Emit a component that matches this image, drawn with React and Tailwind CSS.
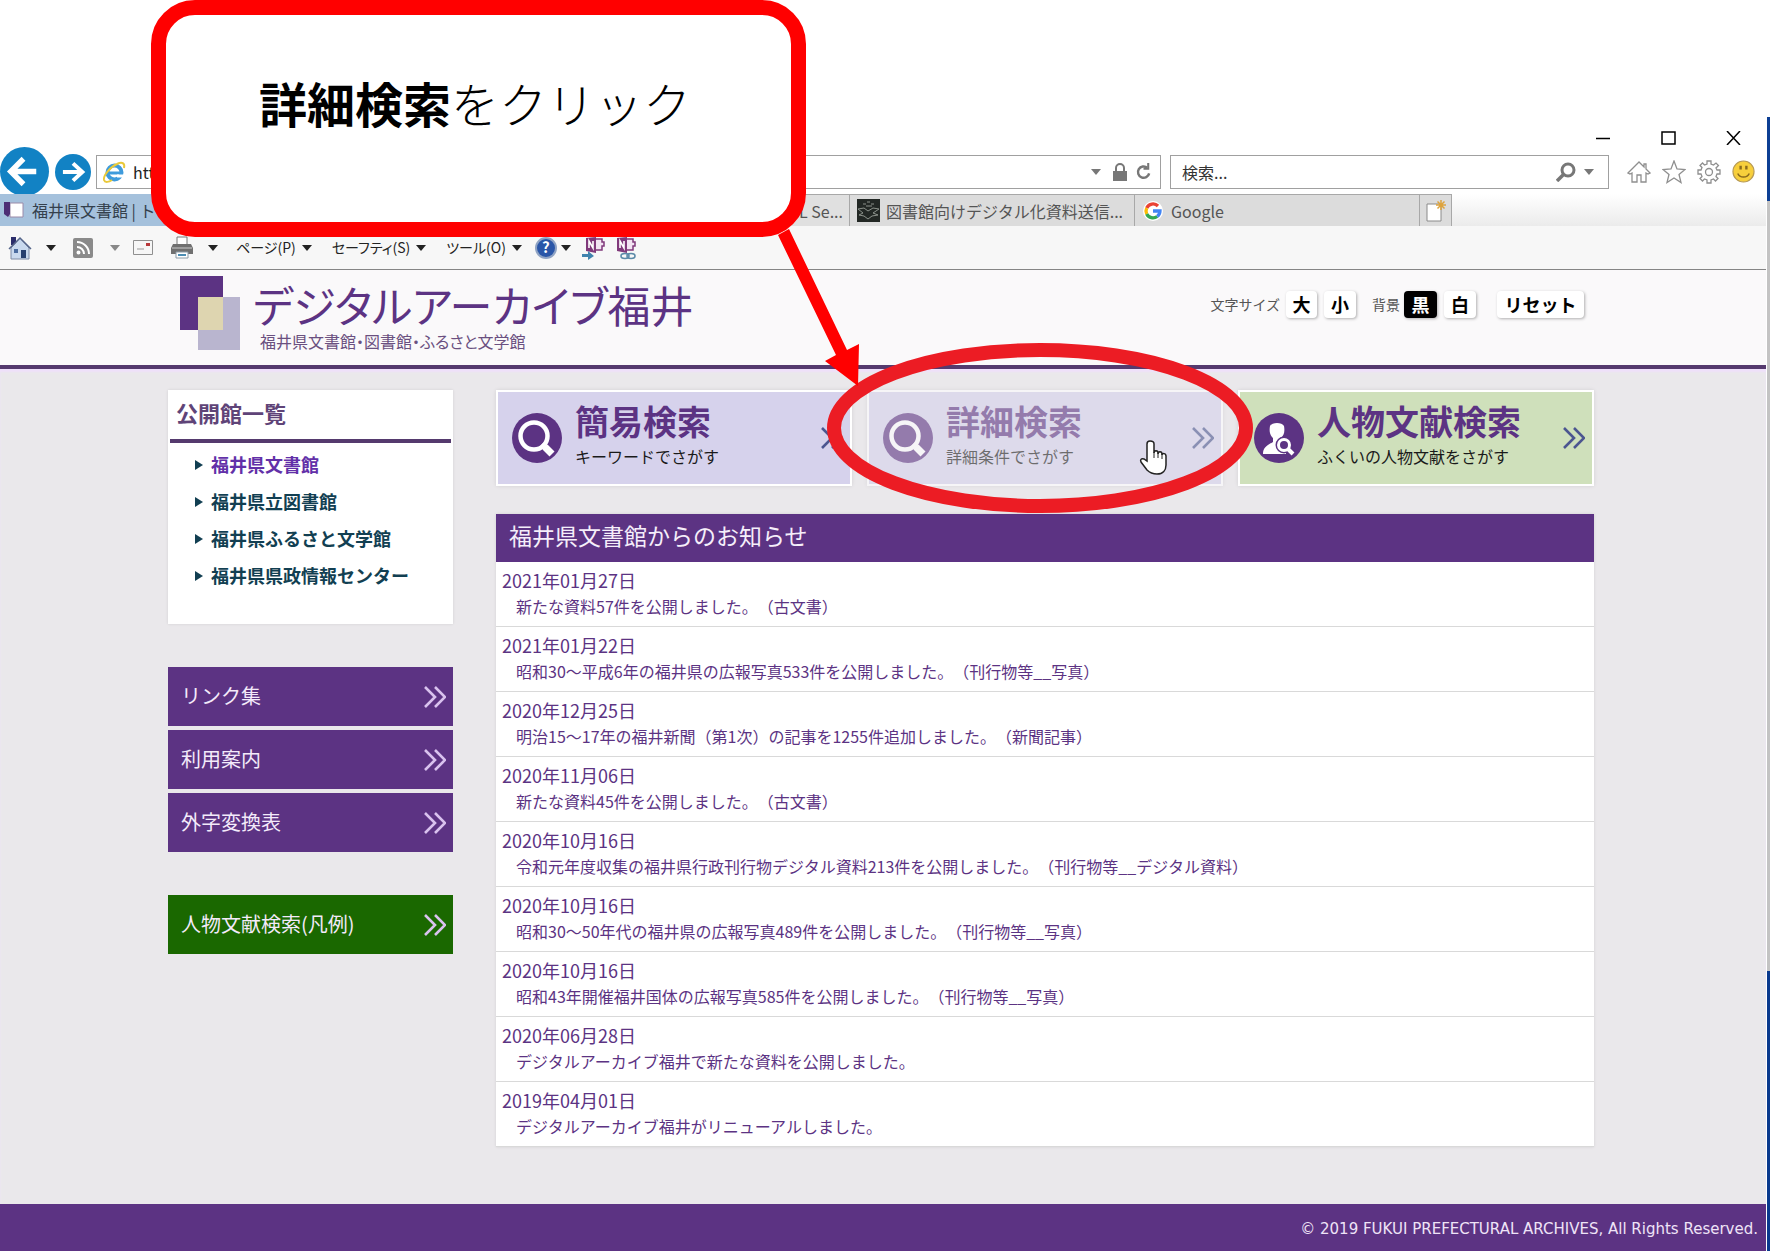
import React from "react";

const news = [
  {date: "2021年01月27日", text: "新たな資料57件を公開しました。（古文書）"},
  {date: "2021年01月22日", text: "昭和30～平成6年の福井県の広報写真533件を公開しました。（刊行物等__写真）"},
  {date: "2020年12月25日", text: "明治15～17年の福井新聞（第1次）の記事を1255件追加しました。（新聞記事）"},
  {date: "2020年11月06日", text: "新たな資料45件を公開しました。（古文書）"},
  {
    date: "2020年10月16日",
    text: "令和元年度収集の福井県行政刊行物デジタル資料213件を公開しました。（刊行物等__デジタル資料）",
  },
  {date: "2020年10月16日", text: "昭和30～50年代の福井県の広報写真489件を公開しました。（刊行物等__写真）"},
  {date: "2020年10月16日", text: "昭和43年開催福井国体の広報写真585件を公開しました。（刊行物等__写真）"},
  {date: "2020年06月28日", text: "デジタルアーカイブ福井で新たな資料を公開しました。"},
  {date: "2019年04月01日", text: "デジタルアーカイブ福井がリニューアルしました。"},
];

const places = ["福井県文書館", "福井県立図書館", "福井県ふるさと文学館", "福井県県政情報センター"];

const Caret = ({className = ""}) => (
  <svg viewBox="0 0 10 6" className={`w-[10px] h-[6px] shrink-0 ${className}`} fill="currentColor">
    <path d="M0 0h10L5 6z" />
  </svg>
);

const Chevrons = ({className = ""}) => (
  <svg
    viewBox="0 0 22 22"
    className={`size-[22px] shrink-0 ${className}`}
    fill="none"
    stroke="currentColor"
    strokeWidth="2.6"
  >
    <path d="M1 1l10 10L1 21M11 1l10 10-10 10" />
  </svg>
);

const RoundArrow = ({size, flip, label}) => (
  <button aria-label={label} className={`${size} shrink-0 rounded-full bg-[#1282c4] text-white`}>
    <svg
      viewBox="0 0 50 50"
      className="size-full"
      fill="none"
      stroke="currentColor"
      strokeWidth="5.5"
    >
      {flip ? <path d="M11 25h25M25 13l13 12-13 12" /> : <path d="M37 25H12M24 12L11 25l13 13" />}
    </svg>
  </button>
);

const IeIcon = () => (
  <svg viewBox="0 0 24 24" className="size-[24px] shrink-0" fill="none">
    <circle cx="12.500" cy="12.500" r="7" stroke="#3f9bdc" strokeWidth="4" />
    <path d="M7 13h14" stroke="#3f9bdc" strokeWidth="3" />
    <path d="M15 16h8" stroke="#fff" strokeWidth="3" />
    <path
      d="M22 8c1-4-1-7-7-4C8 7 1 16 2 20c1 3 5 2 8 0"
      stroke="#e9c93a"
      strokeWidth="2"
    />
  </svg>
);

const TitleBar = () => (
  <div className="flex h-[14px] justify-end gap-[50px] pr-[25px] text-black">
    <button aria-label="最小化">
      <svg viewBox="0 0 16 14" className="w-[16px] h-[14px]" stroke="currentColor" strokeWidth="1.500">
        <path d="M1 7.500h14" />
      </svg>
    </button>
    <button aria-label="最大化">
      <svg viewBox="0 0 15 14" className="w-[15px] h-[14px]" fill="none" stroke="currentColor" strokeWidth="1.500">
        <path d="M1 1h13v12H1z" />
      </svg>
    </button>
    <button aria-label="閉じる">
      <svg viewBox="0 0 15 14" className="w-[15px] h-[14px]" fill="none" stroke="currentColor" strokeWidth="1.500">
        <path d="M1 0l13 14M14 0L1 14" />
      </svg>
    </button>
  </div>
);

const AddressRow = () => (
  <div className="flex h-[49px] items-center overflow-hidden pt-[4px] pr-[11px]">
    <RoundArrow size="size-[49px]" label="戻る" />
    <RoundArrow size="size-[36px] ml-[6px]" flip label="進む" />
    <div className="ml-[5px] flex h-[34px] flex-1 items-center gap-[7px] border border-[#a0a0a0] bg-white px-[5px] pr-[8px] text-[#777]">
      <IeIcon />
      <input
        aria-label="アドレス"
        defaultValue="https://www.library-archives.pref.fukui.lg.jp/"
        className="min-w-0 flex-1 text-[16px] text-[#222] outline-none"
      />
      <Caret />
      <svg viewBox="0 0 16 18" className="ml-[4px] w-[16px] h-[18px] shrink-0" fill="currentColor">
        <path d="M1 8h14v10H1z" />
        <path d="M4 8V5a4 4 0 018 0v3" fill="none" stroke="currentColor" strokeWidth="2" />
      </svg>
      <svg viewBox="0 0 18 18" className="size-[17px] shrink-0" fill="none" stroke="currentColor" strokeWidth="2.600">
        <path d="M13 5A6 6 0 1015 11" />
        <path d="M9 6h5V0" strokeWidth="2.200" />
      </svg>
    </div>
    <div className="ml-[9px] flex h-[34px] w-[439px] items-center border border-[#a0a0a0] bg-white pr-[14px] pl-[11px] text-[#777]">
      <input
        aria-label="検索"
        placeholder="検索..."
        className="min-w-0 flex-1 text-[16px] outline-none placeholder:text-[#333]"
      />
      <svg viewBox="0 0 20 20" className="size-[20px] shrink-0" fill="none" stroke="currentColor">
        <circle cx="12" cy="8" r="6" strokeWidth="3" />
        <path d="M8 12l-7 7" strokeWidth="3.500" />
      </svg>
      <Caret className="ml-[8px]" />
    </div>
    <div className="ml-[18px] flex items-center gap-[11px] text-[#8f8f8f]">
      <svg viewBox="0 0 24 24" className="size-[24px]" fill="none" stroke="currentColor" strokeWidth="1.300">
        <path d="M12 2L1 13l2 1 2-1v9h5v-7h4v7h5v-9l2 1 2-1-4-4V4h-2v3z" />
      </svg>
      <svg viewBox="0 0 24 24" className="size-[24px]" fill="none" stroke="currentColor" strokeWidth="1.300">
        <path d="M12 1l3 8 8 .5-6 5 2 8-7-4.500-7 4.500 2-8-6-5L9 9z" />
      </svg>
      <svg viewBox="0 0 24 24" className="size-[24px]" fill="none" stroke="currentColor" strokeWidth="1.300">
        <circle cx="12" cy="12" r="3.500" />
        <path d="M10 4V1h4v3l2.500 1L19 3l2.500 2.500L19 8l1 2h3v4h-3l-1 2.500 2 2L18.500 21l-2-2-2.500 1v3h-4v-3l-2.500-1-2 2L3 18.500l2-2L4 14H1v-4h3l1-2.500-2-2L5.500 3l2 2z" />
      </svg>
      <svg viewBox="0 0 24 24" className="size-[23px]">
        <circle cx="12" cy="12" r="11" fill="#f7cf3c" stroke="#b79a55" strokeWidth="1.200" />
        <path d="M9 6v4M15 6v4" stroke="#8a6a1c" strokeWidth="2.500" />
        <path d="M6 14c2 5 10 5 12 0" fill="none" stroke="#8a6a1c" strokeWidth="1.500" />
      </svg>
    </div>
  </div>
);

const TabRow = () => (
  <div className="flex h-[32px] items-stretch bg-linear-to-b from-white to-[#ebebeb] text-[16px] text-[#555]">
    <a href="#top" className="flex w-[284px] items-center gap-[8px] bg-[#a5c1dc] pl-[4px] text-[#34404c]">
      <svg viewBox="0 0 20 18" className="w-[20px] h-[18px] shrink-0">
        <path d="M6 2h13v14H6z" fill="#fff" stroke="#9a8aa8" />
        <path d="M0 1h6v12l-2 3-4-3z" fill="#4d2d74" />
      </svg>
      <span className="whitespace-nowrap">福井県文書館 | トップ</span>
    </a>
    <a
      href="#search"
      className="flex min-w-0 flex-1 items-center justify-end border-t border-r border-[#a8a8a8] bg-[#e0e0e0] pr-[6px]"
    >
      NDL Se...
    </a>
    <a
      href="#digital"
      className="flex w-[285px] items-center gap-[6px] border-t border-r border-[#a8a8a8] bg-[#dcdcdc] pl-[7px]"
    >
      <svg viewBox="0 0 23 23" className="size-[23px] shrink-0">
        <path d="M0 0h23v23H0z" fill="#222724" />
        <path
          d="M1 10l6-1 4 3 5-3 6 1-6 4 5 2-6 1-4 3-4-3-5-1 4-2zM6 5h3M10 3h3M14 5h3M9 7h6"
          fill="none"
          stroke="#8b918a"
        />
      </svg>
      <span className="truncate">図書館向けデジタル化資料送信...</span>
    </a>
    <a
      href="#google"
      className="flex w-[285px] items-center gap-[8px] border-t border-r border-[#a8a8a8] bg-[#dcdcdc] pl-[8px]"
    >
      <svg viewBox="0 0 20 20" className="size-[20px] shrink-0" fill="none" strokeWidth="3.300">
        <circle cx="10" cy="10" r="10" fill="#fff" />
        <path d="M15 5a7 7 0 00-11.300 2" stroke="#ea4335" />
        <path d="M3.700 7a7 7 0 000 6" stroke="#fbbc05" />
        <path d="M3.700 13a7 7 0 0010.500 2.500" stroke="#34a853" />
        <path d="M14.200 15.500A7 7 0 0017 10h-7" stroke="#4285f4" />
      </svg>
      Google
    </a>
    <button
      aria-label="新しいタブ"
      className="flex w-[32px] items-center justify-center border-t border-r border-[#a8a8a8] bg-[#dcdcdc]"
    >
      <svg viewBox="0 0 22 24" className="w-[22px] h-[24px]">
        <path d="M2 5h14v17H2z" fill="#fff" stroke="#8a8a8a" />
        <path d="M16 1v10M11 6h10M12.500 2.500l7 7M19.500 2.500l-7 7" stroke="#dda33c" strokeWidth="1.500" />
      </svg>
    </button>
    <div className="w-[314px] shrink-0" />
  </div>
);

const OneNote = ({link}) => (
  <svg viewBox="0 0 24 24" className="size-[24px] shrink-0" fill="none">
    <path d="M13 3h7v3h2v4h-2v4h-7z" fill="#f2e4f2" stroke="#80397b" strokeWidth="1.500" />
    <path d="M4 2l10-1v16L4 15z" fill="#80397b" />
    <path d="M7 12V5l4 7V5" stroke="#fff" strokeWidth="1.600" />
    {link ? (
      <g stroke="#5b8aa8" strokeWidth="1.600">
        <ellipse cx="12" cy="20" rx="4" ry="2.500" />
        <ellipse cx="18" cy="20" rx="4" ry="2.500" />
      </g>
    ) : (
      <path d="M0 18h6v-3l6 5-6 4v-3H0z" fill="#3f83ad" />
    )}
  </svg>
);

const menuStyle = "flex items-center gap-[6px] text-[14px] [font-feature-settings:'palt']";

const CommandBar = () => (
  <div className="flex h-[44px] items-center border-b border-[#858585] bg-[#f7f7f7] pl-[8px] text-[#222]">
    <button aria-label="ホーム" className="flex items-center gap-[14px]">
      <svg viewBox="0 0 24 24" className="size-[24px]">
        <path d="M3 1h5v8H3z" fill="#2b2d6b" />
        <path d="M12 2l9 10v11H3V12z" fill="#c9d9ee" stroke="#7d8aa5" />
        <path d="M1 13L12 2l11 11" fill="none" stroke="#55658a" strokeWidth="1.500" />
        <path d="M13 14h5v8h-5z" fill="#27406f" />
        <path d="M6 13h4v4H6z" fill="#4b6ca0" />
      </svg>
      <Caret />
    </button>
    <button aria-label="フィード" className="ml-[17px] flex items-center gap-[17px] text-[#888]">
      <svg viewBox="0 0 20 20" className="size-[20px]" fill="none" stroke="#fff" strokeWidth="2">
        <rect width="20" height="20" rx="2" fill="#8a8a8a" stroke="none" />
        <path d="M4 9a7 7 0 017 7M4 4a12 12 0 0112 12" />
        <circle cx="5.500" cy="14.500" r="1" />
      </svg>
      <Caret />
    </button>
    <button aria-label="メール" className="ml-[13px]">
      <svg viewBox="0 0 20 15" className="w-[20px] h-[15px]">
        <path d="M.5.5h19v14H.5z" fill="#f6f6f6" stroke="#8f8f8f" />
        <path d="M13 3h4v3h-4z" fill="#b8383a" />
        <path d="M4 9h7" stroke="#999" />
      </svg>
    </button>
    <button aria-label="印刷" className="ml-[17px] flex items-center gap-[14px]">
      <svg viewBox="0 0 24 24" className="size-[24px]">
        <path d="M7 1h10v9H7z" fill="#fff" stroke="#777" />
        <path d="M3 8h18l2 4v6H1v-6z" fill="#707070" />
        <path d="M2 12h20" stroke="#ccc" />
        <path d="M6 16h12v6H6z" fill="#fff" stroke="#8b9aa5" />
        <path d="M8 19h8" stroke="#4b8db3" strokeWidth="2" />
      </svg>
      <Caret />
    </button>
    <button className={`${menuStyle} ml-[18px]`}>
      ページ(P) <Caret />
    </button>
    <button className={`${menuStyle} ml-[20px]`}>
      セーフティ(S) <Caret />
    </button>
    <button className={`${menuStyle} ml-[20px]`}>
      ツール(O) <Caret />
    </button>
    <button aria-label="ヘルプ" className="ml-[13px] flex items-center gap-[4px]">
      <span className="flex size-[22px] items-center justify-center rounded-full border-2 border-[#8fa3c4] bg-[#2a56a8] text-[15px] font-bold text-white">
        ?
      </span>
      <Caret />
    </button>
    <button aria-label="OneNote に送る" className="ml-[11px]">
      <OneNote />
    </button>
    <button aria-label="OneNote リンク ノート" className="ml-[7px]">
      <OneNote link />
    </button>
  </div>
);

const keyStyle =
  "flex h-[27px] items-center justify-center rounded-[4px] text-[18px] font-bold shadow-[1px_1px_3px_rgba(0,0,0,0.3)]";

const SiteHeader = () => (
  <header className="flex h-[99px] items-start justify-between border-b-4 border-[#553a6e] bg-[#faf9fa] pr-[182px] pl-[180px]">
    <div className="flex pt-[6px]">
      <svg viewBox="0 0 60 75" className="w-[60px] h-[75px]">
        <path d="M0 0h43v54H0z" fill="#5c3383" />
        <path d="M18 21h42v53H18z" fill="#b9b5cf" />
        <path d="M18 21h25v33H18z" fill="#ded5b0" />
      </svg>
      <h1 className="ml-[13px] flex flex-col text-[#5c3383] [font-feature-settings:'palt']">
        <span className="text-[43px] leading-[56px]">デジタルアーカイブ福井</span>
        <span className="ml-[7px] text-[16px] leading-[18px] text-[#6a5080]">
          福井県文書館・図書館・ふるさと文学館
        </span>
      </h1>
    </div>
    <div className="mt-[21px] flex items-center text-[14px] text-[#555]">
      文字サイズ
      <button className={`${keyStyle} ml-[6px] w-[31px] bg-white text-black`}>大</button>
      <button className={`${keyStyle} ml-[7px] w-[32px] bg-white text-black`}>小</button>
      <span className="ml-[16px]">背景</span>
      <button className={`${keyStyle} ml-[4px] w-[33px] bg-black text-white`}>黒</button>
      <button className={`${keyStyle} ml-[7px] w-[32px] bg-white text-black`}>白</button>
      <button className={`${keyStyle} ml-[21px] w-[87px] bg-white text-black`}>リセット</button>
    </div>
  </header>
);

const SideLink = ({children, color}) => (
  <a
    href="#side"
    className={`flex h-[59px] items-center justify-between pr-[7px] pl-[13px] text-[20px] text-[#f3eafa] ${color}`}
  >
    <span className="pb-[2px]">{children}</span>
    <Chevrons className="text-[#d9c2ee]" />
  </a>
);

const Sidebar = () => (
  <aside className="w-[285px] shrink-0">
    <section className="h-[234px] bg-white px-[2px] shadow-[0_0_3px_rgba(0,0,0,0.1)]">
      <h2 className="h-[53px] border-b-4 border-[#553a6e] pl-[6px] text-[22px] leading-[44px] font-bold text-[#5f4478]">
        公開館一覧
      </h2>
      <ul className="pt-[3px] pl-[25px]">
        {places.map((place, i) => (
          <li key={place} className="flex h-[37px] items-center gap-[8px] text-[#123f52]">
            <svg viewBox="0 0 8 10" className="w-[8px] h-[10px]" fill="currentColor">
              <path d="M0 0l8 5-8 5z" />
            </svg>
            <a href="#place" className={`text-[18px] font-bold ${i === 0 ? "text-[#6230a8]" : ""}`}>
              {place}
            </a>
          </li>
        ))}
      </ul>
    </section>
    <nav className="mt-[43px] flex flex-col gap-[4px]">
      <SideLink color="bg-[#5c3383]">リンク集</SideLink>
      <SideLink color="bg-[#5c3383]">利用案内</SideLink>
      <SideLink color="bg-[#5c3383]">外字変換表</SideLink>
    </nav>
    <nav className="mt-[43px]">
      <SideLink color="bg-[#1a6800]">人物文献検索(凡例)</SideLink>
    </nav>
  </aside>
);

const GlassIcon = () => (
  <svg viewBox="0 0 50 50" className="size-[50px] shrink-0" fill="none" stroke="#fff">
    <circle cx="25" cy="25" r="25" fill="#5c3383" stroke="none" />
    <circle cx="22" cy="23" r="13.500" strokeWidth="4.500" />
    <path d="M30 31l3.500 3.500" strokeWidth="5" />
    <path d="M33 34l7 7" strokeWidth="7" />
  </svg>
);

const PersonIcon = () => (
  <svg viewBox="0 0 50 50" className="size-[50px] shrink-0">
    <circle cx="25" cy="25" r="25" fill="#5c3383" />
    <path
      d="M16 13c2-4 12-4 14 0 1 6 0 9-3 12v3l5 3v10H9c0-6 3-8 10-12v-4c-3-3-4-6-3-12z"
      fill="#fff"
    />
    <circle cx="30" cy="32" r="8.500" fill="#5c3383" />
    <circle cx="30" cy="32" r="5.500" fill="none" stroke="#fff" strokeWidth="3" />
    <path d="M34 36l5 5" stroke="#fff" strokeWidth="4" />
  </svg>
);

const SearchCard = ({icon, title, text, color}) => (
  <a
    href="#search"
    className={`flex h-[96px] items-center border-2 border-white pr-[7px] pl-[14px] shadow-[0_0_4px_rgba(0,0,0,0.1)] ${color}`}
  >
    {icon}
    <span className="ml-[13px] flex flex-1 flex-col pb-[7px] whitespace-nowrap">
      <span className="text-[34px] leading-[42px] font-bold text-[#5c3383]">{title}</span>
      <span className="text-[16px] leading-[28px] text-[#1a1a1a]">{text}</span>
    </span>
    <Chevrons className="text-[#4c5690]" />
  </a>
);

const News = () => (
  <section className="mt-[28px] bg-white shadow-[0_0_3px_rgba(0,0,0,0.1)]">
    <h2 className="h-[48px] bg-[#5c3383] pl-[13px] text-[23px] leading-[43px] text-[#f5eefa]">
      福井県文書館からのお知らせ
    </h2>
    <dl className="[text-spacing-trim:space-all]">
      {news.map((n, i) => (
        <div key={i} className="border-b border-[#d9d9d9] pt-[5px] pb-[7px] pl-[6px] text-[#5c3383]">
          <dt className="text-[18px] leading-[26px]">{n.date}</dt>
          <dd className="pl-[14px] text-[16px] leading-[26px]">
            <a href="#news">{n.text}</a>
          </dd>
        </div>
      ))}
    </dl>
  </section>
);

// red callout, arrow, ring and hand pointer drawn over the page
const Annotations = () => (
  <>
    <svg
      viewBox="0 0 1770 1251"
      className="pointer-events-none absolute top-0 left-0 w-[1770px] h-[1251px]"
      fill="none"
    >
      <ellipse cx="1040" cy="428" rx="206" ry="78" stroke="#ec1c24" strokeWidth="14" />
      <path d="M778 235l11-6 58 121 12-6-1 42-33-25 11-6z" fill="#f00" />
      <path
        d="M1150 441c-2 0-3 1-3 3v17l-3-2c-3-1-4 1-3 3l6 8c3 3 6 4 10 4 6 0 9-4 9-9v-9c0-3-4-3-4-1v-1c0-3-4-3-4 0v-1c0-3-4-3-4 0v-9c0-2-2-3-4-3z"
        fill="#fff"
        stroke="#222"
        strokeWidth="1.500"
      />
      <path d="M1154 452v6M1158 453v5M1162 454v5" stroke="#222" />
    </svg>
    <div className="absolute top-0 left-[151px] w-[655px] h-[237px] rounded-[44px] border-[15px] border-[#f00] bg-white">
      <p className="pt-[57px] pl-[93px] text-[48px] leading-[60px] font-light text-black">
        <b className="font-bold">詳細検索</b>をクリック
      </p>
    </div>
  </>
);

export default function App() {
  return (
    <div className="relative flex min-h-screen bg-white font-['Noto_Sans_CJK_JP',sans-serif]">
      <div className="flex min-w-0 flex-1 flex-col pt-[131px]">
        <TitleBar />
        <AddressRow />
        <TabRow />
        <CommandBar />
        <SiteHeader />
        <main className="flex flex-1 gap-[43px] bg-[#eae8eb] pt-[21px] pr-[172px] pb-[57px] pl-[168px] shadow-[inset_0_3px_2px_#efe0fa]">
          <Sidebar />
          <div className="min-w-0 flex-1">
            <div className="grid grid-cols-3 gap-[15px]">
              <SearchCard
                icon={<GlassIcon />}
                title="簡易検索"
                text="キーワードでさがす"
                color="bg-[#d6d2ec]"
              />
              <SearchCard
                icon={<GlassIcon />}
                title="詳細検索"
                text="詳細条件でさがす"
                color="bg-[#d6d2ec] opacity-60"
              />
              <SearchCard
                icon={<PersonIcon />}
                title="人物文献検索"
                text="ふくいの人物文献をさがす"
                color="bg-[#cfe0bb]"
              />
            </div>
            <News />
          </div>
        </main>
        <footer className="h-[47px] bg-[#5c3383] pr-[8px] text-right font-['DejaVu_Sans',sans-serif] text-[15px] leading-[50px] text-[#efe3f7]">
          © 2019 FUKUI PREFECTURAL ARCHIVES, All Rights Reserved.
        </footer>
      </div>
      <div className="ml-px flex w-[3px] flex-col pt-[117px]">
        <div className="h-[84px] bg-[#0d3f94]" />
        <div className="h-[770px] bg-[#c3c3c3]" />
        <div className="flex-1 bg-[#0a3a8e]" />
      </div>
      <Annotations />
    </div>
  );
}
